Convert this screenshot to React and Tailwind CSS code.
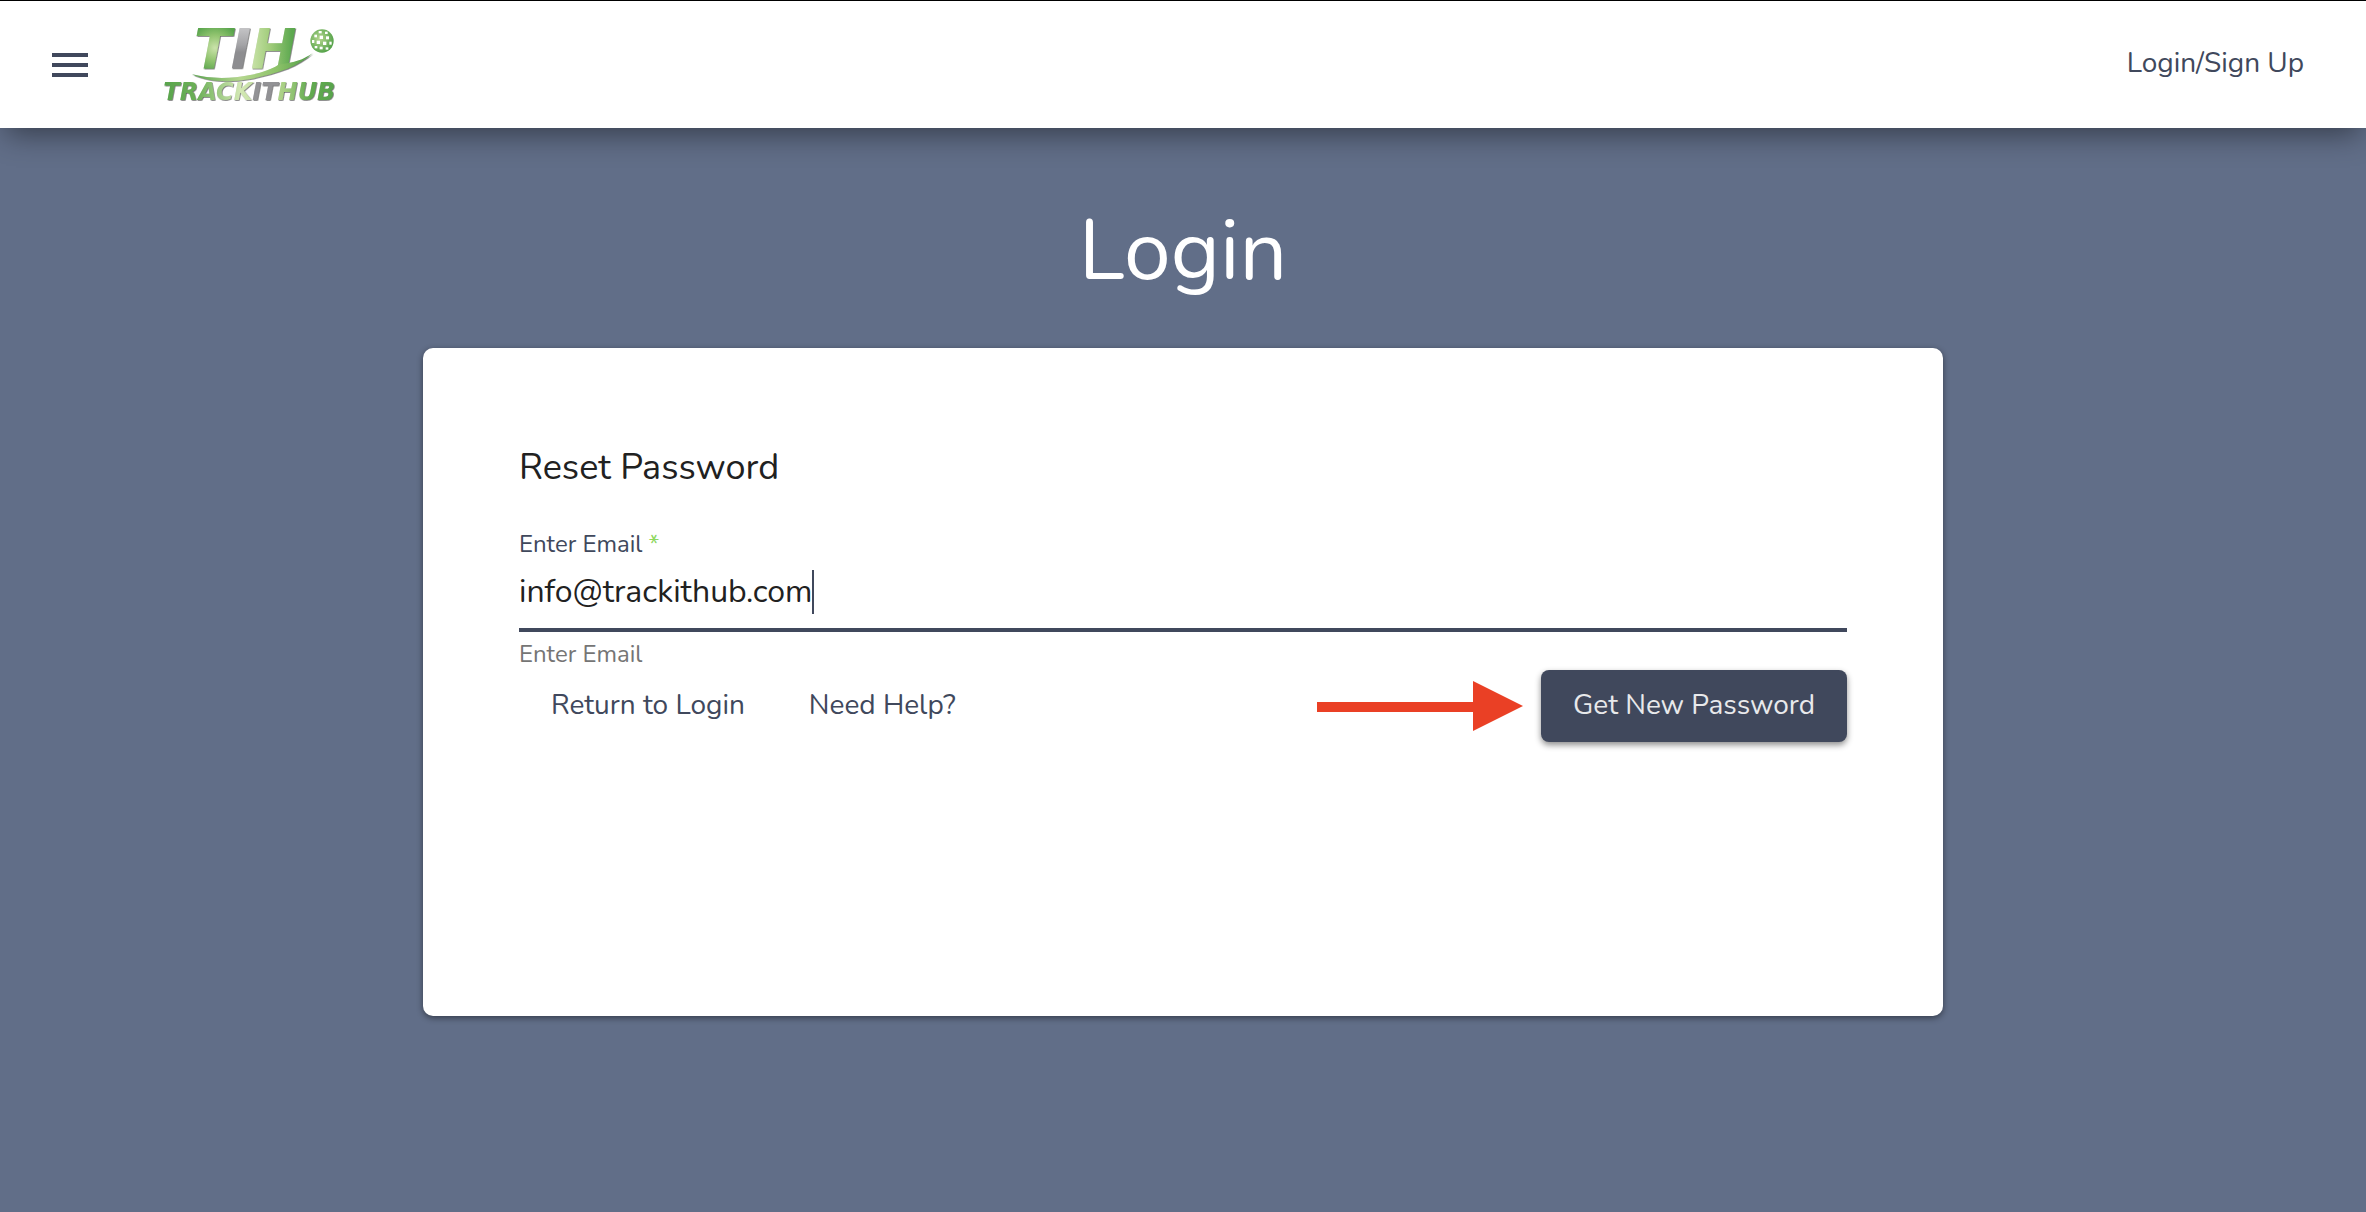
import React, { useState } from 'react';

const Logo = () => (
  <svg viewBox="30 -10 540 300" className="h-[100px] w-[180px] overflow-visible" role="img" aria-label="TrackItHub">
    <defs>
      <radialGradient id="tFill" gradientUnits="userSpaceOnUse" cx="195" cy="95" r="75">
        <stop offset="0" stopColor="#cbe3ab" />
        <stop offset="0.5" stopColor="#93c571" />
        <stop offset="1" stopColor="#58a44c" />
      </radialGradient>
      <linearGradient id="iFill" gradientUnits="userSpaceOnUse" x1="0" y1="38" x2="0" y2="156">
        <stop offset="0" stopColor="#c2c2c4" />
        <stop offset="0.4" stopColor="#a4a4a7" />
        <stop offset="0.6" stopColor="#8d8d90" />
      </linearGradient>
      <linearGradient id="hFill" gradientUnits="userSpaceOnUse" x1="290" y1="0" x2="450" y2="0">
        <stop offset="0" stopColor="#d3e8b4" />
        <stop offset="0.45" stopColor="#9fcb79" />
        <stop offset="0.85" stopColor="#5ca84f" />
      </linearGradient>
      <linearGradient id="swoosh" gradientUnits="userSpaceOnUse" x1="125" y1="0" x2="490" y2="0">
        <stop offset="0" stopColor="#58a44c" />
        <stop offset="0.4" stopColor="#b5d78f" />
        <stop offset="0.7" stopColor="#8dc269" />
        <stop offset="1" stopColor="#4b9a44" />
      </linearGradient>
      <linearGradient id="word" gradientUnits="userSpaceOnUse" x1="40" y1="0" x2="556" y2="0">
        <stop offset="0" stopColor="#58a44c" />
        <stop offset="0.2" stopColor="#6db058" />
        <stop offset="0.45" stopColor="#d3e8b4" />
        <stop offset="0.7" stopColor="#a9d084" />
        <stop offset="0.85" stopColor="#62aa50" />
        <stop offset="1" stopColor="#58a44c" />
      </linearGradient>
      <radialGradient id="ball" cx="0.4" cy="0.4" r="0.6">
        <stop offset="0" stopColor="#b5d78f" />
        <stop offset="1" stopColor="#58a44c" />
      </radialGradient>
      <filter id="edge" x="-5%" y="-5%" width="110%" height="115%">
        <feDropShadow dx="2" dy="2" stdDeviation="1" floodColor="#333" floodOpacity="0.8" />
      </filter>
    </defs>
    <g fontFamily="DejaVu Sans, sans-serif" fontWeight="700" fontStyle="italic" filter="url(#edge)">
      <text y="156" fontSize="164">
        <tspan x="132" fill="url(#tFill)">T</tspan>
        <tspan x="242" fill="url(#iFill)">I</tspan>
        <tspan x="302" fill="url(#hFill)">H</tspan>
      </text>
      <path
        d="M126 174C170 196 236 200 296 189C384 172 446 150 488 111C462 128 444 134 426 138L384 146C366 158 340 168 300 176C240 188 180 188 126 174Z"
        fill="url(#swoosh)"
      />
      <text x="40" y="250" fontSize="72" fill="url(#word)">
        TRACK<tspan fill="#929295">IT</tspan>HUB
      </text>
    </g>
    <circle cx="516" cy="74" r="35" fill="url(#ball)" />
    <g fill="#fff">
      <rect x="506" y="44" width="9" height="7" />
      <rect x="525" y="46" width="8" height="7" />
      <rect x="493" y="55" width="8" height="8" />
      <rect x="509" y="58" width="10" height="10" />
      <rect x="528" y="60" width="9" height="9" />
      <rect x="486" y="71" width="7" height="9" />
      <rect x="500" y="73" width="10" height="10" />
      <rect x="519" y="76" width="10" height="10" />
      <rect x="538" y="76" width="7" height="9" />
      <rect x="494" y="89" width="8" height="7" />
      <rect x="509" y="91" width="9" height="8" />
      <rect x="527" y="93" width="8" height="7" />
    </g>
  </svg>
);

const Header = () => (
  <header className="relative z-10 flex h-32 items-center border-t border-black bg-white pl-[46px] pr-[62px] shadow-[0_12px_28px_-6px_rgba(0,0,0,0.45)]">
    <button type="button" aria-label="Open menu" className="text-[#40485c]">
      <svg viewBox="0 0 24 24" className="size-12" fill="currentColor">
        <path d="M3 6h18v2H3zM3 11h18v2H3zM3 16h18v2H3z" />
      </svg>
    </button>
    <a href="#" className="ml-[66px] pb-1">
      <Logo />
    </a>
    <a href="#" className="ml-auto pb-1 text-[28px] leading-9 text-[#40485c]">
      Login/Sign Up
    </a>
  </header>
);

const Arrow = () => (
  <svg viewBox="0 0 206 50" className="h-[50px] w-[206px] shrink-0" aria-hidden="true">
    <path d="M0 21H156V0L206 25L156 50V31H0Z" fill="#ea4025" />
  </svg>
);

const App = () => {
  const [email, setEmail] = useState('info@trackithub.com');

  return (
    <div className="min-h-screen bg-[#616e88] font-[Nunito,Lato,sans-serif]">
      <Header />

      <main className="px-8 pb-24">
        <h1 className="pb-[38px] pt-[66px] text-center text-[84px] leading-[116px] text-white">Login</h1>

        <section className="mx-auto min-h-[668px] w-full max-w-[1520px] rounded-[10px] bg-white p-24 shadow-[0_2px_6px_rgba(0,0,0,0.45)]">
          <h2 className="text-4xl leading-12 text-[#212121]">Reset Password</h2>

          <form onSubmit={(e) => e.preventDefault()} className="mt-[38px]">
            <label htmlFor="email" className="block text-2xl leading-7 text-[#40485c]">
              Enter Email <span className="text-[#8fd85f]">*</span>
            </label>
            <div className="mt-3 flex h-[62px] items-start border-b-4 border-[#40485c]">
              <input
                id="email"
                type="email"
                required
                value={email}
                onChange={(e) => setEmail(e.target.value)}
                className="field-sizing-content text-[32px] leading-11 text-[#212121] caret-transparent outline-none"
              />
              <span className="h-11 w-[2px] bg-[#40485c]" />
            </div>
            <p className="pb-0.5 pt-2 text-2xl leading-7 text-[#757575]">Enter Email</p>

            <div className="flex items-center text-[28px] leading-9">
              <a href="#" className="px-8 pb-0.5 text-[#40485c]">Return to Login</a>
              <a href="#" className="px-8 pb-0.5 text-[#40485c]">Need Help?</a>
              <div className="ml-auto flex items-center gap-[18px]">
                <Arrow />
                <button
                  type="submit"
                  className="h-[72px] rounded-lg bg-[#40485c] px-8 pb-0.5 text-[#e8e9eb] shadow-[0_3px_6px_rgba(0,0,0,0.45)]"
                >
                  Get New Password
                </button>
              </div>
            </div>
          </form>
        </section>
      </main>
    </div>
  );
};

export default App;
